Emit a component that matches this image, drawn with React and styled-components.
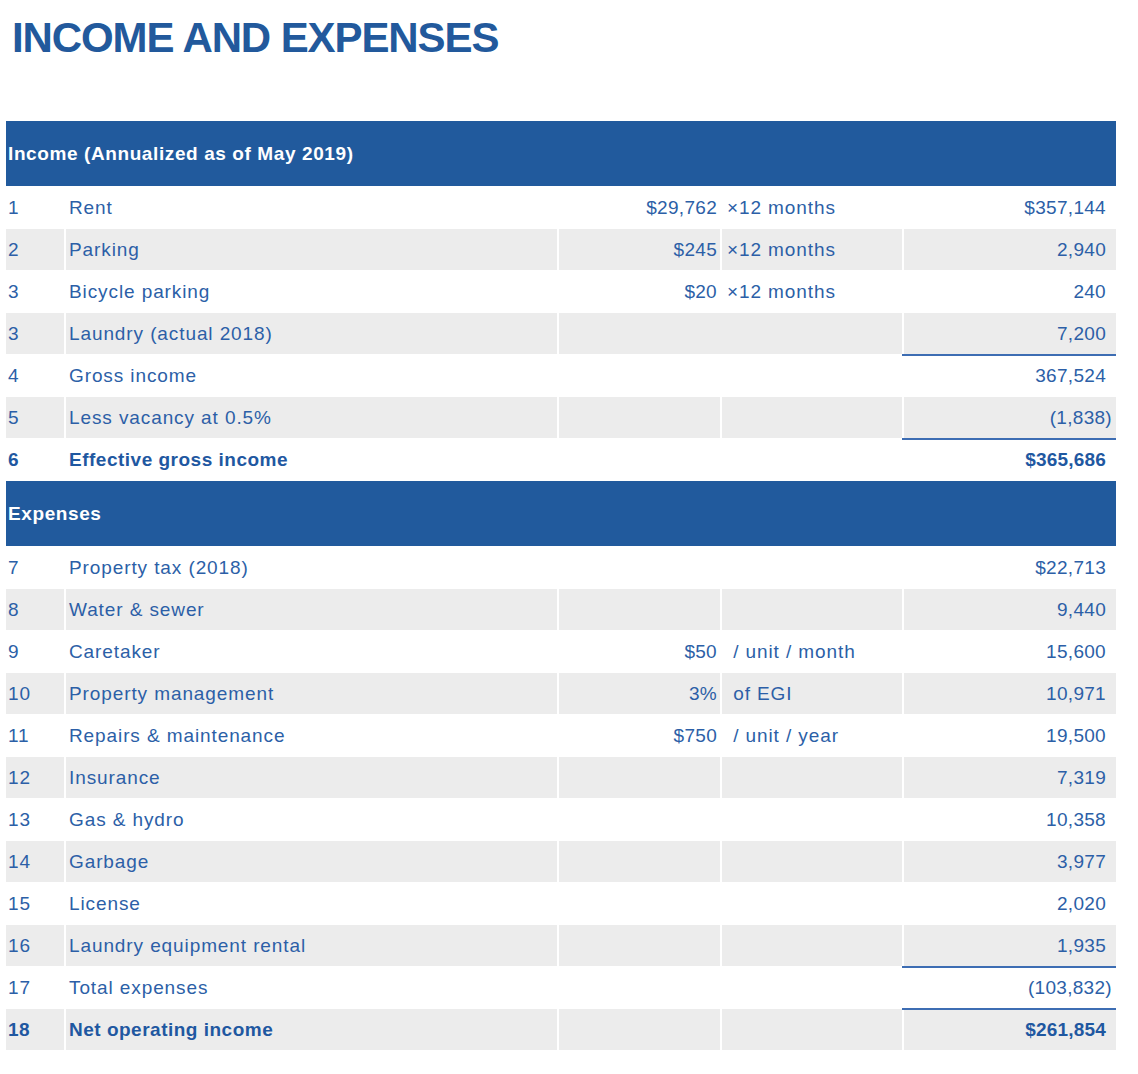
import React from "react";
import styled, { createGlobalStyle } from "styled-components";

const BLUE = "#215a9d";
const TEXT = "#2c5fa7";
const GREY = "#ececec";
const RULE = "#3d6db3";

const income = [
  { n: "1", label: "Rent", amt: "$29,762", unit: "×12 months", total: "$357,144" },
  { n: "2", label: "Parking", amt: "$245", unit: "×12 months", total: "2,940" },
  { n: "3", label: "Bicycle parking", amt: "$20", unit: "×12 months", total: "240" },
  { n: "3", label: "Laundry (actual 2018)", merged: true, total: "7,200", rule: true },
  { n: "4", label: "Gross income", total: "367,524" },
  { n: "5", label: "Less vacancy at 0.5%", total: "1,838", neg: true, rule: true },
  { n: "6", label: "Effective gross income", total: "$365,686", bold: true },
];

const expenses = [
  { n: "7", label: "Property tax (2018)", total: "$22,713" },
  { n: "8", label: "Water & sewer", total: "9,440" },
  { n: "9", label: "Caretaker", amt: "$50", unit: "\u00a0/ unit / month", total: "15,600" },
  { n: "10", label: "Property management", amt: "3%", unit: "\u00a0of EGI", total: "10,971" },
  { n: "11", label: "Repairs & maintenance", amt: "$750", unit: "\u00a0/ unit / year", total: "19,500" },
  { n: "12", label: "Insurance", total: "7,319" },
  { n: "13", label: "Gas & hydro", total: "10,358" },
  { n: "14", label: "Garbage", total: "3,977" },
  { n: "15", label: "License", total: "2,020" },
  { n: "16", label: "Laundry equipment rental", total: "1,935", rule: true },
  { n: "17", label: "Total expenses", total: "103,832", neg: true, rule: true },
  { n: "18", label: "Net operating income", total: "$261,854", bold: true },
];

const GlobalStyle = createGlobalStyle`
  body {
    margin: 0;
    background: #fff;
    font-family: "Liberation Sans", Arial, sans-serif;
  }
`;

const Page = styled.div`
  width: 1138px;
  padding: 0 6px 24px;
  box-sizing: border-box;
`;

const Title = styled.h1`
  margin: 16px 0 0 6px;
  font-size: 42px;
  line-height: 44px;
  font-weight: 700;
  letter-spacing: -1.1px;
  color: #22599c;
`;

const Table = styled.div`
  margin-top: 61px;
  width: 1110px;
  display: flex;
  flex-direction: column;
  gap: 1px;
`;

const SectionBar = styled.div`
  height: 65px;
  background: ${BLUE};
  display: flex;
  align-items: center;
  padding-left: 2px;
  color: #fff;
  font-size: 19px;
  font-weight: 700;
  letter-spacing: 0.6px;
`;

const Row = styled.div`
  display: grid;
  grid-template-columns: 58px 491px 161px 180px 212px;
  column-gap: 2px;
  height: 41px;
  color: ${TEXT};
  font-size: 19px;
  letter-spacing: 0.9px;
  font-weight: ${(p) => (p.$bold ? 700 : 400)};
`;

const Cell = styled.div`
  position: relative;
  display: flex;
  align-items: center;
  white-space: pre;
  background: ${(p) => (p.$shade ? GREY : "transparent")};
  justify-content: ${(p) => (p.$right ? "flex-end" : "flex-start")};
  padding: ${(p) => p.$pad || "0"};
  grid-column: ${(p) => (p.$span ? `span ${p.$span}` : "auto")};
  letter-spacing: ${(p) => (p.$bold ? "0.5px" : "inherit")};
  color: ${(p) => (p.$bold ? "#1f58a1" : "inherit")};
`;

const Amount = styled(Cell)`
  letter-spacing: 0.3px;
`;

const Total = styled(Cell)`
  letter-spacing: ${(p) => (p.$bold ? "0.2px" : "0.3px")};
  ${(p) =>
    p.$rule &&
    `
    &::after {
      content: "";
      position: absolute;
      z-index: 1;
      left: -2px;
      right: 0;
      bottom: -2px;
      height: 2px;
      background: ${RULE};
    }
  `}
`;

const Paren = styled.span`
  margin-right: -6px;
`;

function LineRow({ row, shade }) {
  const { n, label, amt, unit, total, merged, neg, bold, rule } = row;
  return (
    <Row $bold={bold}>
      <Cell $shade={shade} $pad="0 0 0 2px" $bold={bold}>
        {n}
      </Cell>
      <Cell $shade={shade} $pad="0 0 0 3px" $bold={bold}>
        {label}
      </Cell>
      {merged ? (
        <Cell $shade={shade} $span={2} />
      ) : (
        <>
          <Amount $shade={shade} $right $pad="0 3px 0 0">
            {amt}
          </Amount>
          <Cell $shade={shade} $pad="0 0 0 5px">
            {unit}
          </Cell>
        </>
      )}
      <Total $shade={shade} $right $pad="0 10px 0 0" $rule={rule} $bold={bold}>
        {neg ? (
          <>
            ({total}
            <Paren>)</Paren>
          </>
        ) : (
          total
        )}
      </Total>
    </Row>
  );
}

export default function App() {
  return (
    <Page>
      <GlobalStyle />
      <Title>INCOME AND EXPENSES</Title>
      <Table>
        <SectionBar>Income (Annualized as of May 2019)</SectionBar>
        {income.map((r, i) => (
          <LineRow key={"i" + i} row={r} shade={i % 2 === 1} />
        ))}
        <SectionBar>Expenses</SectionBar>
        {expenses.map((r, i) => (
          <LineRow key={"e" + i} row={r} shade={i % 2 === 1} />
        ))}
      </Table>
    </Page>
  );
}
